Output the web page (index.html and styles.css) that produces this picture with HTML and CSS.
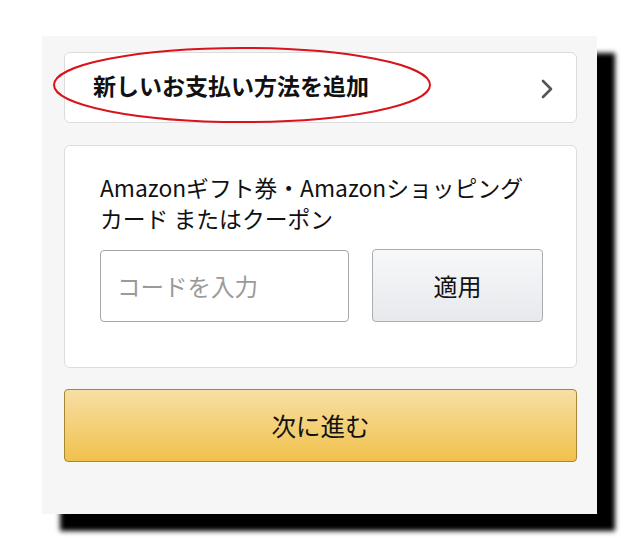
FILE: index.html
```html
<!DOCTYPE html>
<html lang="ja">
<head>
<meta charset="utf-8">
<link rel="stylesheet" href="styles.css">
</head>
<body>
<div class="panel">
  <div class="card add-card">
    <span class="add-title">新しいお支払い方法を追加</span>
    <svg class="chev" width="14" height="20" viewBox="0 0 14 20"><path d="M3 2 L11 10 L3 18" fill="none" stroke="#555" stroke-width="2.6" stroke-linecap="round" stroke-linejoin="round"/></svg>
  </div>
  <div class="card gift-card">
    <p class="gift-label">Amazonギフト券・Amazonショッピング<br><span class="nw">カード</span> またはクーポン</p>
    <div class="code-row">
      <div class="code-input">コードを入力</div>
      <div class="apply-btn">適用</div>
    </div>
  </div>
  <div class="next-btn">次に進む</div>
  <svg class="circle" width="384" height="80" viewBox="0 0 384 80"><ellipse cx="192" cy="40" rx="188" ry="37" fill="none" stroke="#d8141a" stroke-width="2"/></svg>
</div>
</body>
</html>
```
FILE: styles.css
```css
html, body {
  margin: 0;
  padding: 0;
  background: #fff;
}
body {
  font-family: "Noto Sans CJK JP", "Noto Sans", sans-serif;
  color: #111;
  min-height: 551px;
}
.panel {
  position: relative;
  margin: 36px 0 0 42px;
  width: 555px;
  height: 478px;
  box-sizing: border-box;
  background: #f6f6f6;
  padding: 16px 20px 52px 22px;
  display: flex;
  flex-direction: column;
  gap: 21px;
  box-shadow: 18px 17px 5px #000;
}
.card {
  background: #fff;
  border: 1px solid #dcdcdc;
  border-radius: 6px;
  box-sizing: border-box;
}
.add-card {
  height: 71px;
  margin-bottom: 1px;
  display: flex;
  align-items: center;
  justify-content: space-between;
  padding: 0 22px 0 28px;
}
.add-title {
  font-size: 23px;
  font-weight: bold;
  margin-top: -6px;
}
.chev {
  margin-top: 2px;
}
.gift-card {
  height: 223px;
  padding: 26px 34px 0 35px;
}
.gift-label {
  margin: 0;
  font-size: 22.8px;
  line-height: 31px;
  color: #111;
}
.nw {
  white-space: nowrap;
}
.code-row {
  margin-top: 16px;
  display: flex;
  gap: 23px;
}
.code-input {
  flex: none;
  width: 249px;
  height: 72px;
  box-sizing: border-box;
  border: 1px solid #a6a6a6;
  border-radius: 4px;
  padding-left: 16px;
  display: flex;
  align-items: center;
  font-size: 23.5px;
  color: #9a9a9a;
}
.apply-btn {
  flex: none;
  width: 171px;
  height: 73px;
  box-sizing: border-box;
  border: 1px solid #a9adb4;
  border-radius: 4px;
  background: linear-gradient(#f7f8fa, #e7e9ec);
  display: flex;
  align-items: center;
  justify-content: center;
  font-size: 24px;
  color: #111;
  margin-top: -1px;
}
.next-btn {
  height: 73px;
  box-sizing: border-box;
  border: 1px solid #a88734;
  border-radius: 4px;
  background: linear-gradient(#f7dfa5, #f0c14b);
  display: flex;
  align-items: center;
  justify-content: center;
  font-size: 24.5px;
  color: #111;
}
.circle {
  position: absolute;
  left: 8px;
  top: 9px;
}
```
